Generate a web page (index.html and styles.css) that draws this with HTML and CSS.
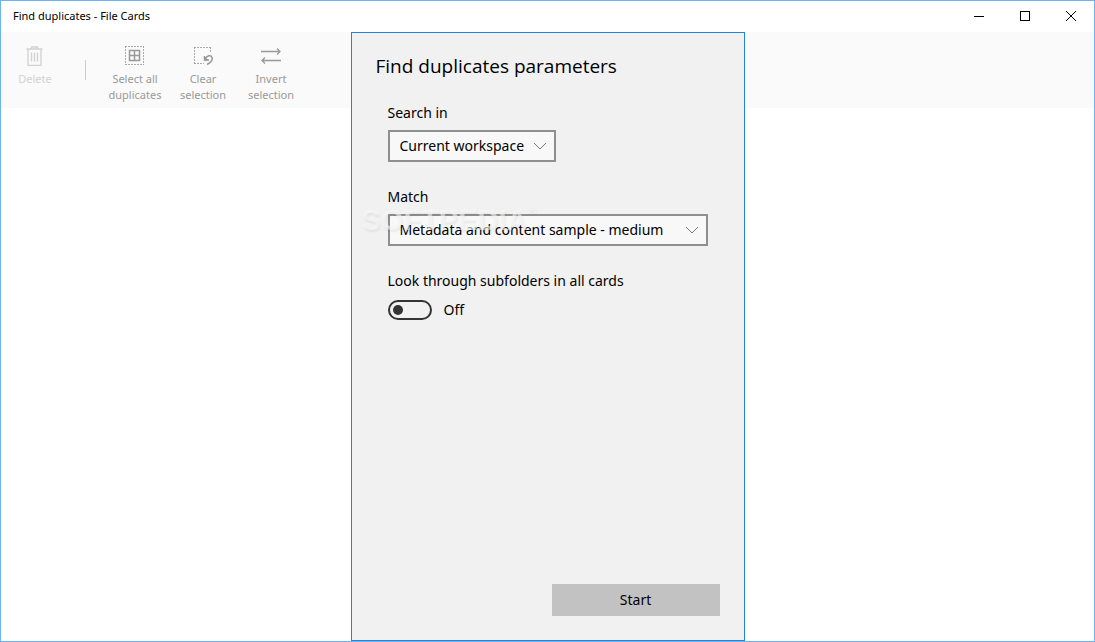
FILE: index.html
```html
<!DOCTYPE html>
<html lang="en">
<head>
  <meta charset="UTF-8" />
  <meta name="viewport" content="width=device-width, initial-scale=1.0"/>
  <title>Find duplicates - File Cards</title>
  <link rel="stylesheet" href="styles.css">
</head>
<body>

<div class="window">
  <header class="titlebar">
    <span class="title">Find duplicates - File Cards</span>
    <div class="window-controls">
      <button type="button" aria-label="Minimize">
        <svg width="10" height="10" shape-rendering="crispEdges"><path d="M0 5.5h10"/></svg>
      </button>
      <button type="button" aria-label="Maximize">
        <svg width="10" height="10" shape-rendering="crispEdges"><path d="M.5 .5h9v9h-9z"/></svg>
      </button>
      <button type="button" aria-label="Close">
        <svg width="10" height="10"><path d="M0 0l10 10M10 0L0 10"/></svg>
      </button>
    </div>
  </header>

  <main>
    <div class="toolbar">
      <button type="button" class="tool" disabled>
        <svg width="20" height="20" viewBox="0 0 20 20">
          <path d="M1.500 3h16M6.500 3V1h6v2M3 3v16.500h13V3" stroke-width="1.300"/>
          <path d="M6.500 6.500v9M9.500 6.500v9M12.500 6.500v9" stroke-width="1.300"/>
        </svg>
        Delete
      </button>
      <div class="separator"></div>
      <button type="button" class="tool">
        <svg width="20" height="20" viewBox="0 0 20 20">
          <path d="M0 .5h19M0 18.500h19M.5 0v19M18.500 0v19" stroke-dasharray="2 1" stroke-opacity=".8"/>
          <path d="M4.500 4.500h10v10h-10zM9.500 4.500v10M4.500 9.500h10" stroke-width="1.500"/>
        </svg>
        Select all duplicates
      </button>
      <button type="button" class="tool">
        <svg width="20" height="20" viewBox="0 0 20 20">
          <path d="M1 1.500h17M1 17.500h10M1.500 1v17M17.500 1v6" stroke-dasharray="2 1" stroke-opacity=".8"/>
          <path d="M12 13C14 9.500 18 8.500 19 11.500C20 14.500 17 17 14 18.500M11.500 10v4h4.500" stroke-width="1.500"/>
          <path d="M11.500 11v3h3z" fill="currentColor"/>
        </svg>
        Clear selection
      </button>
      <button type="button" class="tool">
        <svg width="20" height="20" viewBox="0 0 20 20">
          <path d="M0 5.500h19M16 2.500l3 3-3 3M20 14.500H1M4 11.500l-3 3 3 3" stroke-width="1.300"/>
        </svg>
        Invert selection
      </button>
    </div>

    <div class="overlay">
      <form class="dialog">
        <h1>Find duplicates parameters</h1>

        <div class="field">
          <label for="searchIn">Search in</label>
          <div class="combo combo-small">
            <select id="searchIn">
              <option>Current workspace</option>
            </select>
            <svg width="14" height="8"><path d="M1 1l6 6 6-6"/></svg>
          </div>
        </div>

        <div class="field">
          <label for="match">Match</label>
          <div class="combo">
            <select id="match">
              <option>Metadata and content sample - medium</option>
            </select>
            <svg width="14" height="8"><path d="M1 1l6 6 6-6"/></svg>
          </div>
          <div class="watermark" aria-hidden="true">SOFTPEDIA<sup>®</sup></div>
        </div>

        <div class="field">
          <label for="subfolders">Look through subfolders in all cards</label>
          <div class="switch">
            <input type="checkbox" role="switch" id="subfolders">
            <span>Off</span>
          </div>
        </div>

        <button type="button" class="start">Start</button>
      </form>
    </div>
  </main>
</div>

</body>
</html>
```

FILE: styles.css
```css
* {
  box-sizing: border-box;
}

body {
  margin: 0;
  font-family: "Noto Sans", "Open Sans", sans-serif;
  font-size: 14px;
  line-height: 20px;
  color: #000;
  background: #fff;
}

button, select {
  font: inherit;
  color: inherit;
}

svg {
  display: block;
  fill: none;
  stroke: currentColor;
}

.window {
  min-height: 100vh;
  display: flex;
  flex-direction: column;
  border: 1px solid #6cb2f5;
}

.titlebar {
  display: flex;
  justify-content: space-between;
  align-items: center;
  height: 31px;
  padding: 0 0 1px 12px;
}

.title {
  font-size: 11px;
}

.window-controls {
  display: flex;
  align-self: stretch;
}

.window-controls button {
  width: 46px;
  display: flex;
  align-items: center;
  justify-content: center;
  border: none;
  background: none;
}

main {
  flex: 1;
  position: relative;
}

.toolbar {
  display: flex;
  align-items: flex-start;
  height: 76px;
  padding-top: 14px;
  background: #fafafa;
}

.tool {
  width: 68px;
  display: flex;
  flex-direction: column;
  align-items: center;
  gap: 5px;
  padding: 0 6px;
  border: none;
  background: none;
  font-size: 11px;
  line-height: 16px;
  color: #999;
}

.tool:disabled {
  color: #d2d2d2;
}

.separator {
  width: 1px;
  height: 20px;
  margin: 14px 15px 0 16px;
  background: #ccc;
}

/* dialog over the workspace */
.overlay {
  position: absolute;
  inset: 0;
  display: flex;
  justify-content: center;
}

.dialog {
  width: 394px;
  display: flex;
  flex-direction: column;
  padding: 19px 24px 24px;
  border: 1px solid #2583d3;
  background: #f1f1f1;
}

h1 {
  margin: 0 0 23px;
  font-family: "Open Sans", "Noto Sans", sans-serif;
  font-size: 19px;
  font-weight: 400;
  line-height: 28px;
}

.field {
  position: relative;
  display: flex;
  flex-direction: column;
  gap: 7px;
  margin: 0 12px 25px;
}

.combo {
  position: relative;
}

.combo-small {
  width: 168px;
}

.combo select {
  display: block;
  width: 100%;
  height: 32px;
  padding: 0 28px 0 10px;
  border: 2px solid #8f8f8f;
  border-radius: 0;
  background: #f8f8f8;
  appearance: none;
}

.combo svg {
  position: absolute;
  right: 9px;
  top: 12px;
  color: #777;
  pointer-events: none;
}

.watermark {
  position: absolute;
  left: -26px;
  top: 17px;
  font: bold 29px/32px "Liberation Sans", Arial, sans-serif;
  color: rgba(248, 248, 248, 0.6);
  text-shadow: 1px 2px 2px rgba(0, 0, 0, 0.06);
  pointer-events: none;
}

.watermark sup {
  font-size: 12px;
  line-height: 12px;
  vertical-align: top;
}

.switch {
  display: flex;
  align-items: center;
  gap: 12px;
  height: 24px;
}

.switch input {
  appearance: none;
  width: 44px;
  height: 20px;
  margin: 0;
  padding: 3px;
  border: 2px solid #333;
  border-radius: 10px;
}

.switch input::before {
  content: "";
  display: block;
  width: 10px;
  height: 10px;
  border-radius: 50%;
  background: #333;
}

.switch input:checked::before {
  margin-left: auto;
}

.start {
  width: 168px;
  height: 32px;
  margin-top: auto;
  align-self: flex-end;
  border: none;
  background: #c2c2c2;
}
```
